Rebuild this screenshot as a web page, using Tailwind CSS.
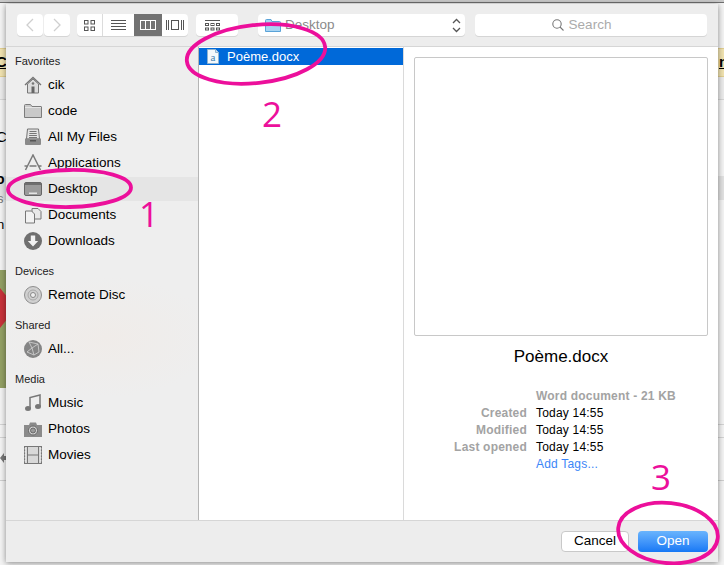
<!DOCTYPE html>
<html><head><meta charset="utf-8"><script src="https://cdn.jsdelivr.net/npm/@tailwindcss/browser@4"></script></head>
<body class="m-0">
<div class="relative w-[724px] h-[565px] overflow-hidden bg-[#f4f4f4] pt-[4px] pl-[6px] font-['Liberation_Sans',Arial,sans-serif] text-[13px] text-black">

<!-- page behind the dialog -->
<div class="absolute inset-0 overflow-hidden">
  <div class="h-[3px] bg-[#c9c9c9] border-b border-[#6f6f6f]"></div>
  <div class="absolute left-0 top-[48px] w-full h-[29px] bg-[#f1e3b0] border-y border-[#e2cf8f]"></div>
  <div class="absolute left-0 top-[77px] w-full h-[23px] bg-[#ececec] border-b border-[#d6d6d6]"></div>
  <div class="absolute left-0 top-[176px] w-full h-[24px] bg-[#e2e2e2]"></div>
  <svg class="absolute left-0 top-[270px]" width="8" height="118" viewBox="0 0 8 118"><rect width="8" height="118" fill="#93a064"/><path d="M0 18 8 28V48L0 58z" fill="#c8323a"/></svg>
  <div class="absolute left-0 top-[424px] w-full h-px bg-[#d4d4d4]"></div>
  <div class="absolute left-0 top-[437px] w-full h-px bg-[#d4d4d4]"></div>
  <div class="absolute left-0 top-[480px] w-full h-px bg-[#cfcfcf]"></div>
  <svg class="absolute left-0 top-[452px]" width="7" height="12" viewBox="0 0 7 12"><path d="M0 6 4 1v3h3v4H4v3z" fill="#777"/></svg>
  <span class="absolute left-[-4px] top-[53px] text-[15px] leading-[18px] font-bold underline">C</span>
  <span class="absolute left-[719px] top-[53px] text-[15px] leading-[18px] font-bold underline">n</span>
  <span class="absolute left-[-4px] top-[128px] text-[15px] leading-[18px]">C</span>
  <span class="absolute left-[-4px] top-[170px] text-[14px] leading-[18px] font-bold">o</span>
  <span class="absolute left-[-3px] top-[190px] text-[13px] leading-[18px] text-[#777]">s</span>
  <span class="absolute left-[-3px] top-[216px] text-[13px] leading-[18px]">n</span>
</div>

<!-- dialog -->
<div class="relative w-[712px] h-[558px] flex flex-col bg-[#ededed] shadow-[0_1px_6px_rgba(0,0,0,0.45)]">
  <!-- toolbar -->
  <div class="h-[43px] shrink-0 flex items-start pt-[10px] pl-[11px] border-b border-[#d6d6d6]">
    <div class="flex gap-px">
      <div class="w-[26px] h-[22px] bg-white rounded-[4px] shadow-[0_1px_0_#d5d5d5] flex items-center justify-center">
        <svg width="8" height="14" viewBox="0 0 8 14" fill="none" stroke="#cfcfcf" stroke-width="1.3"><path d="M7 1 1 7l6 6"/></svg>
      </div>
      <div class="w-[26px] h-[22px] bg-white rounded-[4px] shadow-[0_1px_0_#d5d5d5] flex items-center justify-center">
        <svg width="8" height="14" viewBox="0 0 8 14" fill="none" stroke="#cfcfcf" stroke-width="1.3"><path d="m1 1 6 6-6 6"/></svg>
      </div>
    </div>
    <div class="ml-[7px] w-[111px] h-[22px] bg-white rounded-[4px] shadow-[0_1px_0_#d5d5d5] flex overflow-hidden">
      <div class="w-[26px] flex items-center justify-center border-r border-[#dcdcdc]">
        <svg width="11" height="11" viewBox="0 0 11 11" fill="none" stroke="#555"><rect x=".5" y=".5" width="3.5" height="3.5"/><rect x="7" y=".5" width="3.5" height="3.5"/><rect x=".5" y="7" width="3.5" height="3.5"/><rect x="7" y="7" width="3.5" height="3.5"/></svg>
      </div>
      <div class="w-[31px] flex items-center justify-center">
        <svg width="15" height="11" viewBox="0 0 15 11" stroke="#555"><path d="M0 .5h15M0 3.5h15M0 6.5h15M0 9.5h15"/></svg>
      </div>
      <div class="w-[28px] flex items-center justify-center bg-[#727272]">
        <svg width="16" height="10" viewBox="0 0 16 10" fill="none" stroke="#fff"><rect x=".5" y=".5" width="15" height="9"/><path d="M5.5 0v10M10.5 0v10"/></svg>
      </div>
      <div class="flex-1 flex items-center justify-center">
        <svg width="18" height="10" viewBox="0 0 18 10" fill="none" stroke="#555"><rect x="5.5" y=".5" width="7" height="9"/><path d="M.5 0v10M2.5 0v10M15.5 0v10M17.5 0v10"/></svg>
      </div>
    </div>
    <div class="ml-[8px] w-[42px] h-[22px] bg-white rounded-[4px] shadow-[0_1px_0_#d5d5d5] flex items-center pl-[9px]">
      <svg width="15" height="11" viewBox="0 0 15 11" fill="none" stroke="#555"><path d="M0 .5h15" /><rect x=".5" y="3.5" width="3" height="2"/><rect x="6" y="3.5" width="3" height="2"/><rect x="11.5" y="3.5" width="3" height="2"/><rect x=".5" y="8" width="3" height="2"/><rect x="6" y="8" width="3" height="2"/><rect x="11.5" y="8" width="3" height="2"/></svg>
    </div>
    <div class="ml-[20px] w-[207px] h-[22px] bg-white rounded-[4px] shadow-[0_1px_0_#d5d5d5] flex items-center pl-[7px] pr-[4px]">
      <svg width="16" height="14" viewBox="0 0 16 14"><path d="M.5 2.500A1 1 0 0 1 1.500 1.500H6l1 2h7.500a1 1 0 0 1 1 1V13.500H.5z" fill="#a8d4f2" stroke="#5aa3d8"/><path d="M1 5.500h14" stroke="#6fb4e2"/></svg>
      <span class="ml-[4px] pt-px text-[#8a8a8a] text-[13.5px]">Desktop</span>
      <svg class="ml-auto" width="9" height="15" viewBox="0 0 9 15" fill="none" stroke="#555" stroke-width="1.3"><path d="m1 5 3.500-3.500L8 5M1 10l3.500 3.500L8 10"/></svg>
    </div>
    <div class="ml-[10px] w-[232px] h-[22px] bg-white rounded-[4px] shadow-[0_1px_0_#d5d5d5] flex items-center justify-center gap-[5px] pr-[19px]">
      <svg width="12" height="12" viewBox="0 0 12 12" fill="none" stroke="#777" stroke-width="1.100"><circle cx="5" cy="5" r="4.200"/><path d="m8 8 3.500 3.500"/></svg>
      <span class="pt-px text-[#ababab] text-[13.5px]">Search</span>
    </div>
  </div>

  <!-- body -->
  <div class="flex-1 flex min-h-0">
    <!-- sidebar -->
    <aside class="relative w-[193px] shrink-0 border-r border-[#b4b4b4] bg-[radial-gradient(ellipse_110px_60px_at_100px_290px,#f0ece9,#eeeeee)] pt-[6px] text-[13.5px]">
      <div class="h-[16px] leading-[16px] pl-[9px] text-[11px] text-[#222] mb-[3px]">Favorites</div>
      <div class="h-[26px] flex items-center pl-[18px] gap-[6px]">
        <svg width="18" height="18" viewBox="0 0 18 18" class="shrink-0"><path d="M1 9 9 1.500 17 9" fill="none" stroke="#757575" stroke-width="1.400"/><path d="M3.500 8v9h11V8L9 3z" fill="#dcdcdc" stroke="#777"/><rect x="7.500" y="10.500" width="3" height="6.500" fill="#666"/><circle cx="9" cy="7.500" r="1.300" fill="#777"/></svg>
        <span>cik</span>
      </div>
      <div class="h-[26px] flex items-center pl-[18px] gap-[6px]">
        <svg width="18" height="14" viewBox="0 0 18 14" class="shrink-0"><path d="M.5 1.500a1 1 0 0 1 1-1h5l1.500 2h9a.5.5 0 0 1 .5.500v10.500H.5z" fill="#c9c9c9" stroke="#7c7c7c"/><path d="M1 3.500h16" stroke="#e4e4e4"/></svg>
        <span>code</span>
      </div>
      <div class="h-[26px] flex items-center pl-[18px] gap-[6px]">
        <svg width="18" height="18" viewBox="0 0 18 18" class="shrink-0"><path d="M3.500 1h11l1 10H2.500z" fill="#e4e4e4" stroke="#727272"/><path d="M5.500 3.500h7M5.300 5.500h7.400M5.100 7.500h7.800M5 9.500h8" stroke="#777"/><path d="M1 10.500h16V16a1 1 0 0 1-1 1H2a1 1 0 0 1-1-1z" fill="#8a8a8a"/><rect x="6" y="12" width="6" height="1.500" fill="#555"/></svg>
        <span>All My Files</span>
      </div>
      <div class="h-[26px] flex items-center pl-[18px] gap-[6px]">
        <svg width="18" height="18" viewBox="0 0 18 18" fill="none" stroke="#7a7a7a" stroke-width="1.500" class="shrink-0"><path d="m1.500 16 7.500-15 7.500 15M5.500 12h7M.5 12h3.500M14 12h3.500"/></svg>
        <span>Applications</span>
      </div>
      <div class="h-[24px] my-px flex items-center pl-[18px] gap-[6px] bg-[#e5e5e5]">
        <svg width="18" height="14" viewBox="0 0 18 14" class="shrink-0"><rect x=".5" y=".5" width="17" height="13" rx="1.500" fill="#9a9a9a" stroke="#666"/><rect x="1" y="1" width="16" height="2" fill="#6e6e6e"/><rect x="5" y="10.500" width="8" height="1.500" fill="#e5e5e5"/></svg>
        <span>Desktop</span>
      </div>
      <div class="h-[26px] flex items-center pl-[18px] gap-[6px]">
        <svg width="18" height="18" viewBox="0 0 18 18" class="shrink-0"><path d="M8 2.500h6l3 3V13H8z" fill="#e8e8e8" stroke="#777"/><path d="M1.500 5h6l3 3v9h-9z" fill="#f2f2f2" stroke="#777"/></svg>
        <span>Documents</span>
      </div>
      <div class="h-[26px] flex items-center pl-[18px] gap-[6px]">
        <svg width="18" height="18" viewBox="0 0 18 18" class="shrink-0"><circle cx="9" cy="9" r="9" fill="#6f6f6f"/><path d="M6.800 3.500h4.400v5.500h3L9 14.500 3.800 9h3z" fill="#f2f2f2"/></svg>
        <span>Downloads</span>
      </div>

      <div class="h-[16px] leading-[16px] mt-[9px] pl-[9px] text-[11px] text-[#222] mb-[3px]">Devices</div>
      <div class="h-[26px] flex items-center pl-[18px] gap-[6px]">
        <svg width="18" height="18" viewBox="0 0 18 18" fill="none" class="shrink-0"><circle cx="9" cy="9" r="8.500" fill="#d0d0d0" stroke="#8e8e8e"/><circle cx="9" cy="9" r="5" stroke="#a8a8a8"/><circle cx="9" cy="9" r="2.500" fill="#eeeeee" stroke="#888"/></svg>
        <span>Remote Disc</span>
      </div>

      <div class="h-[16px] leading-[16px] mt-[9px] pl-[9px] text-[11px] text-[#222] mb-[3px]">Shared</div>
      <div class="h-[26px] flex items-center pl-[18px] gap-[6px]">
        <svg width="18" height="18" viewBox="0 0 18 18" class="shrink-0"><circle cx="9" cy="9" r="9" fill="#858585"/><path d="M5 2 8 8 3 12M8 8l6-4M8 8l2 7M10 15l5-3M3 12l7 3M14 4l1 8M5 2l9 2" fill="none" stroke="#d6d6d6" stroke-width=".8"/></svg>
        <span>All...</span>
      </div>

      <div class="h-[16px] leading-[16px] mt-[9px] pl-[9px] text-[11px] text-[#222] mb-[3px]">Media</div>
      <div class="h-[26px] flex items-center pl-[18px] gap-[6px]">
        <svg width="18" height="18" viewBox="0 0 18 18" class="shrink-0"><path d="M6 14V3.500L16 1v11" fill="none" stroke="#777" stroke-width="1.500"/><ellipse cx="4" cy="14.500" rx="3" ry="2.500" fill="#777"/><ellipse cx="14" cy="12.500" rx="3" ry="2.500" fill="#777"/></svg>
        <span>Music</span>
      </div>
      <div class="h-[26px] flex items-center pl-[18px] gap-[6px]">
        <svg width="18" height="15" viewBox="0 0 18 15" class="shrink-0"><path d="M0 3h5l1-2.500h6L13 3h5v12H0z" fill="#8a8a8a"/><circle cx="9" cy="8.500" r="4.500" fill="#d6d6d6" stroke="#666"/><circle cx="9" cy="8.500" r="2.500" fill="#9a9a9a" stroke="#666"/></svg>
        <span>Photos</span>
      </div>
      <div class="h-[26px] flex items-center pl-[18px] gap-[6px]">
        <svg width="18" height="18" viewBox="0 0 18 18" class="shrink-0"><rect x=".5" y=".5" width="17" height="17" fill="#d8d8d8" stroke="#777"/><path d="M3.500 0v18M14.500 0v18M3.500 9h11" stroke="#777"/><path d="M1.200 2v14M16.800 2v14" stroke="#eee" stroke-dasharray="1.500 1.500" /></svg>
        <span>Movies</span>
      </div>
    </aside>

    <!-- file column -->
    <div class="w-[205px] shrink-0 bg-white border-r border-[#dadada] pt-px">
      <div class="h-[17px] bg-[#0069d9] flex items-center pl-[8px] gap-[8px] text-white">
        <svg width="12" height="15" viewBox="0 0 12 15" class="shrink-0"><path d="M.5.500h8l3 3v11H.5z" fill="#f4f8fb" stroke="#8fb3cf"/><path d="M8.500.500v3h3" fill="#cfe0ee" stroke="#8fb3cf"/><text x="6" y="12" text-anchor="middle" font-size="11" font-family="Liberation Serif, serif" fill="#3f7fb0">a</text></svg>
        <span>Poème.docx</span>
      </div>
    </div>

    <!-- preview -->
    <div class="flex-1 bg-white pt-[10px] pl-[10px]">
      <div class="w-[294px] h-[279px] border border-[#c8c8c8] rounded-[2px] bg-white"></div>
      <div class="w-[294px] mt-[11px] h-[20px] leading-[20px] text-center text-[17px]">Poème.docx</div>
      <div class="mt-[21px] grid grid-cols-[113px_1fr] gap-x-[9px] text-[12px] leading-[17px] tracking-[0.2px]">
        <span></span><span class="font-bold text-[#a3a3a3]">Word document - 21 KB</span>
        <span class="text-right font-bold text-[#a3a3a3]">Created</span><span>Today 14:55</span>
        <span class="text-right font-bold text-[#a3a3a3]">Modified</span><span>Today 14:55</span>
        <span class="text-right font-bold text-[#a3a3a3]">Last opened</span><span>Today 14:55</span>
        <span></span><span class="text-[#3b86f7]">Add Tags...</span>
      </div>
    </div>
  </div>

  <!-- bottom bar -->
  <div class="h-[42px] shrink-0 border-t border-[#d6d6d6] flex items-start justify-end pt-[10px] pr-[10px] gap-[9px]">
    <div class="w-[68px] h-[21px] bg-white border border-[#c9c9c9] rounded-[4px] flex items-center justify-center text-[13.5px]">Cancel</div>
    <div class="w-[70px] h-[21px] rounded-[4px] bg-gradient-to-b from-[#69b4fd] to-[#1578f5] flex items-center justify-center text-white text-[13.5px]">Open</div>
  </div>
</div>

<!-- hand-drawn annotations -->
<svg class="absolute inset-0" width="724" height="565" viewBox="0 0 724 565" fill="none" stroke="#ec0f9b" stroke-width="3.800">
  <ellipse cx="69.500" cy="188.500" rx="61.500" ry="18.500" transform="rotate(-1 69.500 188.500)"/>
  <ellipse cx="256" cy="54" rx="69.500" ry="29" transform="rotate(-6 256 54)"/>
  <ellipse cx="668" cy="533" rx="50" ry="30" transform="rotate(6 668 533)"/>
</svg>
<span class="absolute left-[139px] top-[194px] text-[35px] leading-[40px] font-['Open_Sans',sans-serif] font-normal text-[#ec0f9b]">1</span>
<span class="absolute left-[262px] top-[94px] text-[35px] leading-[40px] font-['Open_Sans',sans-serif] font-normal text-[#ec0f9b]">2</span>
<span class="absolute left-[651px] top-[457px] text-[35px] leading-[40px] font-['Open_Sans',sans-serif] font-normal text-[#ec0f9b]">3</span>
</div>
</body></html>
